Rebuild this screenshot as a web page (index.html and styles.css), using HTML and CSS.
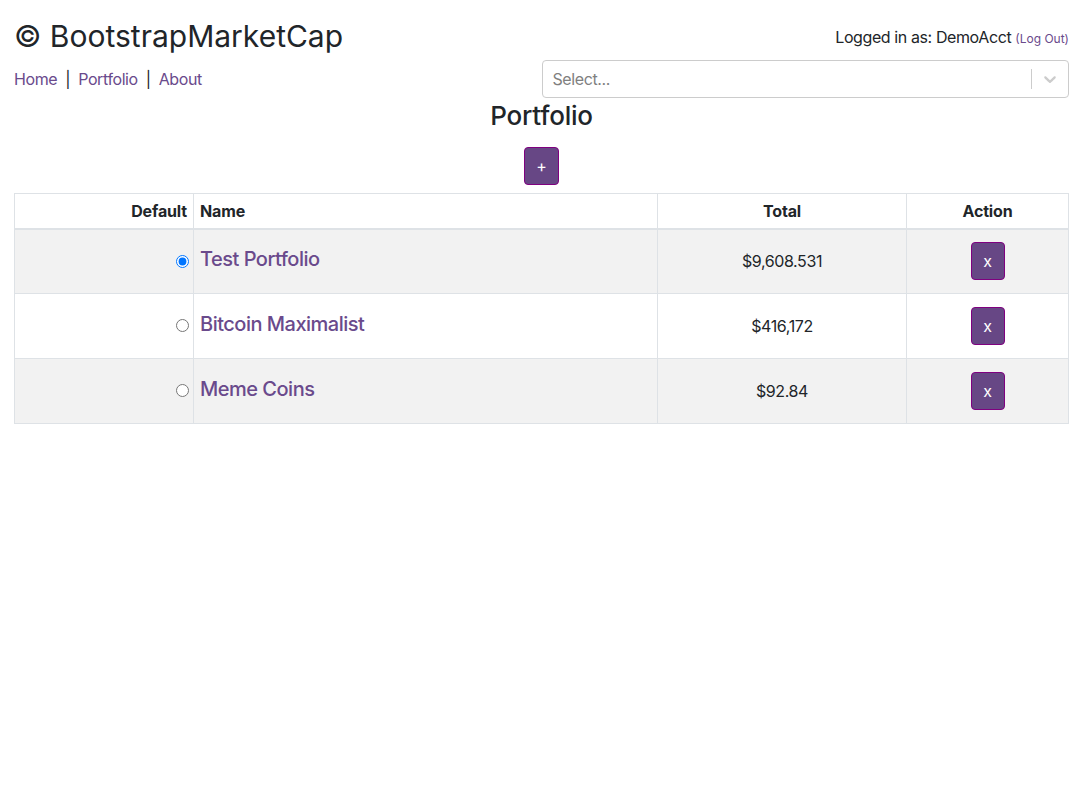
FILE: index.html
```html
<!DOCTYPE html>
<html>
<head>
<meta charset="utf-8">
<link rel="stylesheet" href="styles.css">
</head>
<body>
<div class="page">
  <header class="top">
    <h1 class="brand">© BootstrapMarketCap</h1>
    <div class="login">Logged in as: DemoAcct <a class="logout" href="#">(Log Out)</a></div>
  </header>
  <div class="navrow">
    <nav class="nav">
      <a href="#">Home</a><span class="sep">|</span><a href="#">Portfolio</a><span class="sep">|</span><a href="#">About</a>
    </nav>
    <div class="select">
      <span class="placeholder">Select...</span>
      <span class="indicators">
        <span class="divider"></span>
        <svg class="chev" width="20" height="20" viewBox="0 0 20 20"><path d="M4.516 7.548c0.436-0.446 1.043-0.481 1.576 0l3.908 3.747 3.908-3.747c0.533-0.481 1.141-0.446 1.574 0 0.436 0.445 0.408 1.197 0 1.615-0.406 0.418-4.695 4.502-4.695 4.502-0.217 0.223-0.502 0.335-0.787 0.335s-0.57-0.112-0.789-0.335c0 0-4.287-4.084-4.695-4.502s-0.436-1.170 0-1.615z" fill="#cccccc"/></svg>
      </span>
    </div>
  </div>
  <h2 class="title">Portfolio</h2>
  <div class="addwrap"><button class="btn btn-add">+</button></div>
  <table class="table">
    <thead>
      <tr>
        <th class="c-default">Default</th>
        <th class="c-name">Name</th>
        <th class="c-total">Total</th>
        <th class="c-action">Action</th>
      </tr>
    </thead>
    <tbody>
      <tr class="striped">
        <td class="c-default"><input type="radio" name="def" checked></td>
        <td class="c-name"><h5 class="pname"><a href="#">Test Portfolio</a></h5></td>
        <td class="c-total">$9,608.531</td>
        <td class="c-action"><button class="btn btn-x">x</button></td>
      </tr>
      <tr>
        <td class="c-default"><input type="radio" name="def"></td>
        <td class="c-name"><h5 class="pname"><a href="#">Bitcoin Maximalist</a></h5></td>
        <td class="c-total">$416,172</td>
        <td class="c-action"><button class="btn btn-x">x</button></td>
      </tr>
      <tr class="striped">
        <td class="c-default"><input type="radio" name="def"></td>
        <td class="c-name"><h5 class="pname"><a href="#">Meme Coins</a></h5></td>
        <td class="c-total">$92.84</td>
        <td class="c-action"><button class="btn btn-x">x</button></td>
      </tr>
    </tbody>
  </table>
</div>
</body>
</html>
```

FILE: styles.css
```css
* { box-sizing: border-box; }
html, body { margin: 0; padding: 0; background: #fff; }
body {
  font-family: Inter, "Noto Sans", sans-serif;
  font-size: 16px;
  line-height: 1.5;
  letter-spacing: -0.4px;
  color: #212529;
}
a { color: #6a4a8c; text-decoration: none; }
.page { padding: 18px 8px 0 14px; }
.top {
  display: flex;
  justify-content: space-between;
  align-items: flex-start;
}
.brand {
  margin: 0;
  font-size: 30px;
  font-weight: 400;
  line-height: 1.2;
  letter-spacing: 0;
}
.login { font-size: 16px; margin-top: 7px; }
.logout { font-size: 12px; letter-spacing: 0; }
.navrow {
  display: grid;
  grid-template-columns: 1fr 1fr;
  align-items: center;
  margin-top: 6px;
}
.nav { display: flex; align-items: center; }
.sep { margin: 0 8px; color: #212529; }
.select {
  height: 38px;
  border: 1px solid #cccccc;
  border-radius: 4px;
  display: flex;
  align-items: center;
  justify-content: space-between;
  padding-left: 10px;
}
.placeholder { color: #808080; }
.indicators { display: flex; align-items: center; height: 100%; }
.divider { width: 1px; height: 20px; background: #cccccc; }
.chev { margin: 0 8px; }
.title {
  margin: 2px 0 0;
  text-align: center;
  font-size: 26px;
  font-weight: 500;
  line-height: 1.2;
  letter-spacing: -0.2px;
}
.addwrap { text-align: center; margin-top: 16px; }
.btn {
  font-family: Inter, "Noto Sans", sans-serif;
  font-size: 16px;
  letter-spacing: 0;
  background: #674785;
  color: #fff;
  border: 1px solid #800080;
  border-radius: 4px;
  line-height: 1.5;
  height: 38px;
  padding: 0;
}
.btn-add { width: 35px; }
.btn-x { width: 34px; }
.table {
  width: 100%;
  margin-top: 8px;
  border-collapse: collapse;
  border: 1px solid #dee2e6;
}
.table th, .table td {
  border: 1px solid #dee2e6;
  padding: 0 6px;
}
.table thead th {
  height: 35px;
  font-weight: 700;
  letter-spacing: -0.15px;
  border-bottom: 2px solid #dee2e6;
}
.table tbody tr { height: 65px; }
.table tbody td { vertical-align: middle; }
.striped td { background: #f2f2f2; }
.c-default { width: 179px; text-align: right; }
.table td.c-default { padding-right: 4px; }
.c-name { width: 464px; text-align: left; }
.c-total { width: 249px; text-align: center; }
.c-action { text-align: center; }
.c-default input { margin: 0; width: 13px; height: 13px; vertical-align: middle; position: relative; top: -2px; }
.pname {
  margin: 0 0 4px;
  font-size: 20px;
  font-weight: 500;
  line-height: 1.2;
  letter-spacing: -0.5px;
}
```
